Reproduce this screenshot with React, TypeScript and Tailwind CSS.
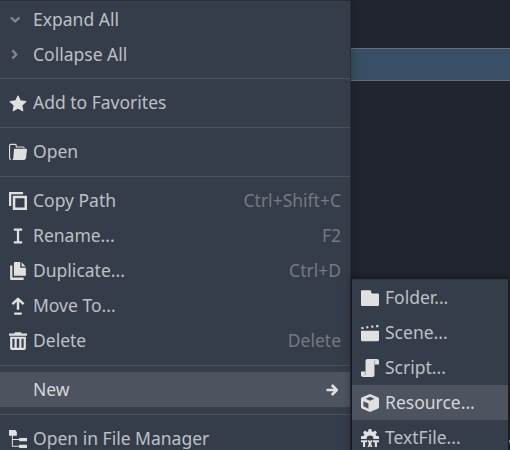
import type { ReactNode } from 'react';

const Icon = ({ children }: { children?: ReactNode }) => (
  <svg className="h-[18px] w-[18px] shrink-0" viewBox="0 0 16 16" fill="#e0e0e0">{children}</svg>
);

const icons: Record<string, ReactNode> = {
  expand: <path d="m1.8 5.8 3.7 3.5 3.7-3.5" fill="none" stroke="#858a92" strokeWidth="2" strokeLinejoin="round" />,
  collapse: <path d="m3 3.8 3.5 3.7L3 11.2" fill="none" stroke="#858a92" strokeWidth="2" strokeLinejoin="round" />,
  star: <path d="m8 1.7 2.1 4.4 4.9.6-3.6 3.4.9 4.8L8 12.6l-4.3 2.3.9-4.8L1 6.7l4.9-.6z" stroke="#e0e0e0" strokeWidth=".9" strokeLinejoin="round" />,
  open: (
    <>
      <path d="M1.7 14.5C1 14.5.5 14 .5 13.3V2.5c0-.8.5-1.3 1.2-1.3h3.6c.7 0 1.2.5 1.2 1.2v1.1h5.8c.7 0 1.2.5 1.2 1.2" fill="none" stroke="#e0e0e0" />
      <path d="M5.2 5h9.9c.6 0 1 .4.9 1l-.9 7.4c-.1 1-.8 1.6-1.7 1.6H2.3c1 0 1.4-.7 1.5-1.5l.6-7.6c0-.5.3-.9.8-.9z" />
    </>
  ),
  copy: (
    <>
      <path d="M0 0h12.5v2H2v10.5H0z" />
      <path d="M3.4 3.4H16V16H3.4zm2.2 2.2v8.2h8.2V5.6z" fillRule="evenodd" />
    </>
  ),
  rename: <path d="M4.3 1.3h7.4v2H9v9.4h2.7v2H4.3v-2H7V3.3H4.3z" />,
  duplicate: (
    <>
      <path d="M5.4 0H10v5h5v7.3H4.4V1c0-.6.4-1 1-1z" />
      <path d="M11.2.2 14.8 4h-3.6z" />
      <path d="M1 3.2h2v10.6h10V16H2c-.6 0-1-.4-1-1z" />
    </>
  ),
  move: (
    <>
      <path d="M8 11.4V2M3 6.4l5-4.7 5 4.7" fill="none" stroke="#e0e0e0" strokeWidth="2.2" strokeLinejoin="round" />
      <path d="M5.4 14.7h5.2" stroke="#e0e0e0" strokeWidth="2" strokeLinecap="round" />
    </>
  ),
  trash: (
    <>
      <path d="M5 .3h6v1h5v2H0v-2h5z" />
      <path d="M1 4.3h14v10c0 1-.6 1.7-1.6 1.7H2.6C1.6 16 1 15.3 1 14.3zm2 1.8v8h1.9v-8zm3.9 0v8h2.2v-8zm4.2 0v8H13v-8z" fillRule="evenodd" />
    </>
  ),
  tree: (
    <>
      <path d="M0 0h5.5c.3 0 .5.2.5.5L7 2v3H0zM9 7h7v3H9zm0 6h7v3H9z" />
      <path d="M3 4v10.5h6.5M3 8.5h6.5" fill="none" stroke="#e0e0e0" strokeWidth=".9" />
    </>
  ),
  folder: <path d="M1 1h7c.9 0 1 .7 1 1.5 0 1 .4 1.5 1.2 1.5H15c.6 0 1 .4 1 1v9c0 .6-.4 1-1 1H1c-.6 0-1-.4-1-1V2c0-.6.4-1 1-1z" />,
  scene: (
    <>
      <path d="M0 6h16v8.3c0 .6-.4 1-1 1H1c-.6 0-1-.4-1-1z" />
      <path d="m.1 2.9 1.8-.3.7 1.7-2 .3zM4.4 2.2l1.8-.3.7 1.7-1.9.3zM8.8 1.6l1.8-.3.7 1.7-1.9.3zM13.2 1l2.1-.3.3 2-1.8.3z" />
    </>
  ),
  script: (
    <>
      <path d="M6 0h8c1.2 0 2 .8 2 2v2.8h-4V14c0 1.2-.8 2-2 2H2c-1.2 0-2-.8-2-2v-2.8h4V2c0-1.2.8-2 2-2z" />
      <path d="M4 11v2.3c0 .8-.5 1.2-1.2 1.2M12 5V2.6c0-.7.4-1.2 1-1.2" stroke="#8b9099" strokeWidth=".6" fill="none" />
    </>
  ),
  resource: (
    <path d="m8 0 7.3 3.2c.5.3.7.7.7 1.2v7.2c0 .5-.2.9-.7 1.2L8 16 .7 12.8c-.5-.3-.7-.7-.7-1.2V4.4c0-.5.2-.9.7-1.2zm0 2.4L4.1 4.2 8 6l3.9-1.8zM2.1 6.4v4.5l4.5 2.1V8.5z" fillRule="evenodd" />
  ),
  text: (
    <>
      <path d="M6.8 0h2.4l.4 2.1 1.1.5 1.8-1.2 1.7 1.7L13 4.9l.5 1.1 2.5.4v2.4H11a3 3 0 1 0-6 0H0V6.4L2.5 6 3 4.9 1.8 3.1l1.7-1.7 1.8 1.2 1.1-.5z" />
      <path d="M0 10h5.5v1.8H3.7V16H1.8v-4.2H0zM5.8 10h1.7L8 11.5 8.5 10h1.7L9 13l1.2 3H8.5L8 14.5 7.5 16H5.8L7 13zM10.5 10H16v1.8h-1.8V16h-1.9v-4.2h-1.8z" />
    </>
  ),
};

type ItemProps = { icon?: string; label: string; shortcut?: string; active?: boolean; arrow?: boolean };

const Item = ({ icon, label, shortcut, active, arrow }: ItemProps) => (
  <div className={`flex h-[35px] shrink-0 items-center gap-1.5 pr-[9px] pl-[9px] ${active ? 'bg-[#4d535f] text-[#d5d6d9]' : 'text-[#bdc0c5]'}`}>
    <Icon>{icon && icons[icon]}</Icon>
    <span className="grow whitespace-nowrap">{label}</span>
    {shortcut && <span className="text-[#747982]">{shortcut}</span>}
    {arrow && (
      <svg className="mr-[3px] h-3.5 w-3 shrink-0" viewBox="0 0 12 14" fill="none" stroke="#e0e0e0" strokeWidth="2.5" strokeLinejoin="round">
        <path d="M.5 7h10M5.8 2l5 5-5 5" />
      </svg>
    )}
  </div>
);

const Separator = ({ compact }: { compact?: boolean }) => (
  <div className={`flex shrink-0 items-center ${compact ? 'h-[13px]' : 'h-3.5'}`}>
    <div className="h-px w-full bg-[#4a505c]" />
  </div>
);

export default function App() {
  return (
    <div className="relative flex h-[450px] w-[510px] overflow-hidden bg-[#21252d] font-['Noto_Sans',sans-serif] text-[17.5px] leading-[35px]">
      <div className="z-10 flex w-[351px] shrink-0 flex-col border-t border-r border-[#292e38] bg-[#363d4a] pt-px shadow-[0_0_10px_rgba(0,0,0,0.25)]">
        <Item icon="expand" label="Expand All" />
        <Item icon="collapse" label="Collapse All" />
        <Separator compact />
        <Item icon="star" label="Add to Favorites" />
        <Separator />
        <Item icon="open" label="Open" />
        <Separator />
        <Item icon="copy" label="Copy Path" shortcut="Ctrl+Shift+C" />
        <Item icon="rename" label="Rename..." shortcut="F2" />
        <Item icon="duplicate" label="Duplicate..." shortcut="Ctrl+D" />
        <Item icon="move" label="Move To..." />
        <Item icon="trash" label="Delete" shortcut="Delete" />
        <Separator />
        <Item label="New" active arrow />
        <Separator />
        <Item icon="tree" label="Open in File Manager" />
      </div>
      <div className="grow pt-12">
        <div className="h-[33px] border-y border-[#666c77] bg-[#394f65]" />
      </div>
      <div className="absolute top-[279px] left-[352px] z-20 flex w-[156px] flex-col border-t border-[#303743] bg-[#363d4a] shadow-[0_0_6px_2px_rgba(0,0,0,0.3)]">
        <Item icon="folder" label="Folder..." />
        <Item icon="scene" label="Scene..." />
        <Item icon="script" label="Script..." />
        <Item icon="resource" label="Resource..." active />
        <Item icon="text" label="TextFile..." />
      </div>
      <div className="absolute top-[440px] left-[509px] z-20 h-[3px] w-px bg-[#4b8fc0]" />
    </div>
  );
}
